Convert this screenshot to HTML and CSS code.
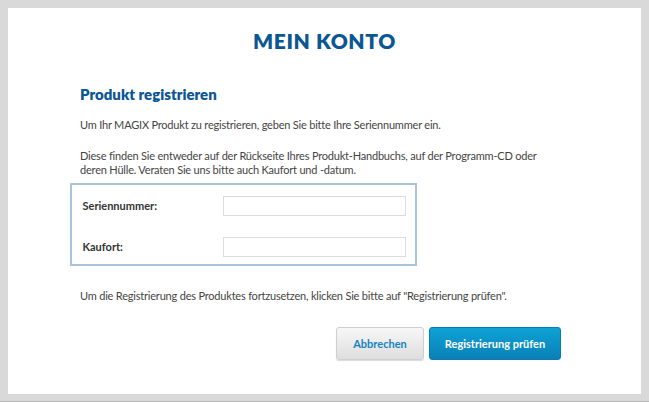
FILE: index.html
```html
<!DOCTYPE html>
<html lang="de">
<head>
<meta charset="utf-8">
<title>Mein Konto</title>
<link rel="stylesheet" href="styles.css">
</head>
<body>
<div class="page">
  <main class="panel">
    <h1 class="title">MEIN KONTO</h1>
    <section class="content">
      <h2 class="subtitle">Produkt registrieren</h2>
      <p class="text intro">Um Ihr MAGIX Produkt zu registrieren, geben Sie bitte Ihre Seriennummer ein.</p>
      <p class="text info">Diese finden Sie entweder auf der Rückseite Ihres Produkt-Handbuchs, auf der Programm-CD oder deren Hülle. Veraten Sie uns bitte auch Kaufort und -datum.</p>
      <div class="form-box">
        <div class="row">
          <label class="label" for="serial">Seriennummer:</label>
          <input class="field" id="serial" type="text">
        </div>
        <div class="row">
          <label class="label" for="place">Kaufort:</label>
          <input class="field" id="place" type="text">
        </div>
      </div>
      <p class="text note">Um die Registrierung des Produktes fortzusetzen, klicken Sie bitte auf "Registrierung prüfen".</p>
      <div class="actions">
        <button class="btn btn-secondary" type="button">Abbrechen</button>
        <button class="btn btn-primary" type="button">Registrierung prüfen</button>
      </div>
    </section>
  </main>
</div>
</body>
</html>
```
FILE: styles.css
```css
html, body {
  margin: 0;
  padding: 0;
}
body {
  background: #d9d9d9;
  font-family: "Lato", "Liberation Sans", sans-serif;
  color: #444;
}
.page {
  width: 649px;
  height: 402px;
  box-sizing: border-box;
  padding: 8px 8px 8px 8px;
  border-bottom: 1px solid #b9b9b9;
}
.panel {
  background: #fff;
  width: 633px;
  height: 386px;
  box-sizing: border-box;
  padding: 20px 80px 0 72px;
}
.title {
  margin: 0;
  text-align: center;
  font-size: 21px;
  line-height: 25px;
  letter-spacing: 0.6px;
  font-weight: 800;
  color: #0b5693;
  padding-left: 8px;
}
.content {
  display: flex;
  flex-direction: column;
}
.subtitle {
  margin: 32px 0 0;
  font-size: 15px;
  line-height: 18px;
  font-weight: 800;
  color: #0b5693;
}
.text {
  margin: 0;
  font-size: 11px;
  line-height: 14px;
  letter-spacing: -0.2px;
  color: #444;
}
.intro { margin-top: 15px; }
.info { margin-top: 17px; }
.note { margin-top: 23px; }
.form-box {
  margin: 6px 0 0 -10px;
  width: 347px;
  box-sizing: border-box;
  border: 2.5px solid #a8c5dd;
  padding: 10.5px 9.5px 7.5px 10.5px;
  display: flex;
  flex-direction: column;
  gap: 21px;
}
.row {
  display: flex;
  align-items: center;
  justify-content: space-between;
}
.label {
  font-size: 11px;
  font-weight: 700;
  color: #333;
}
.field {
  width: 183px;
  height: 20px;
  box-sizing: border-box;
  border: 1px solid #dcdcdc;
  margin: 0;
  padding: 0 4px;
  background: #fff;
}
.actions {
  display: flex;
  justify-content: flex-end;
  gap: 5px;
  margin-top: 24px;
}
.btn {
  height: 33px;
  border-radius: 3px;
  font-family: "Lato", "Liberation Sans", sans-serif;
  font-size: 11px;
  font-weight: 700;
  padding: 0;
  cursor: pointer;
}
.btn-secondary {
  width: 88px;
  color: #1683bf;
  background: linear-gradient(#f7f7f7, #dedede);
  border: 1px solid #cfcfcf;
  box-shadow: 0 1px 1px rgba(0,0,0,0.15);
}
.btn-primary {
  width: 132px;
  color: #fff;
  background: linear-gradient(#0ea2d6, #0a80b6);
  border: 1px solid #0a7bb0;
}
```
